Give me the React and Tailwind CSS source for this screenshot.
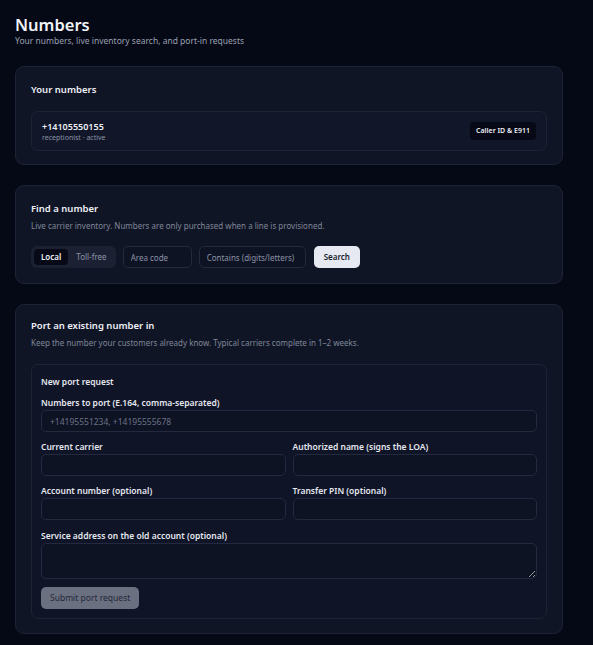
import React from 'react'

const Label = ({ children }) => (
  <div className="mb-[1px] text-[8.5px] font-semibold leading-[12px] text-[#e5e7ef]">{children}</div>
)

const Field = ({ placeholder = '' }) => (
  <input
    placeholder={placeholder}
    className="block h-[22px] w-full rounded-[5px] border border-[#232a3f] bg-[#0e1324] px-[8px] text-[8.5px] text-[#cbd0dc] outline-none placeholder:text-[#6b7285]"
  />
)

export default function App() {
  return (
    <div
      className="min-h-[645px] w-full bg-[#050815] px-[15px] pb-[13px] pt-[14px] text-white"
      style={{ fontFamily: '"Noto Sans", Inter, sans-serif' }}
    >
      {/* Header */}
      <h1 className="text-[16.5px] font-semibold leading-[22px] text-[#f1f3f8]">Numbers</h1>
      <p className="-mt-[1px] text-[8.5px] leading-[12px] text-[#9aa1b2]">
        Your numbers, live inventory search, and port-in requests
      </p>

      {/* Your numbers */}
      <section className="mt-[19px] w-[548px] rounded-[9px] border border-[#1d2336] bg-[#101525] px-[15px] pb-[13px] pt-[16px]">
        <h2 className="text-[9.5px] font-semibold leading-[14px] text-[#eef0f6]">Your numbers</h2>
        <div className="mt-[14px] flex h-[40px] items-center justify-between rounded-[7px] border border-[#1d2336] bg-[#111729] px-[10px]">
          <div>
            <div className="text-[9px] font-semibold leading-[13px] text-[#eef0f6]">+14105550155</div>
            <div className="text-[7px] leading-[10px] text-[#8a91a3]">receptionist · active</div>
          </div>
          <span className="flex h-[18px] items-center rounded-[4px] bg-[#070a16] px-[6px] text-[7px] font-semibold text-[#eef0f6]">
            Caller ID &amp; E911
          </span>
        </div>
      </section>

      {/* Find a number */}
      <section className="mt-[20px] w-[548px] rounded-[9px] border border-[#1d2336] bg-[#101525] px-[15px] pb-[15px] pt-[16px]">
        <h2 className="text-[9.5px] font-semibold leading-[14px] text-[#eef0f6]">Find a number</h2>
        <p className="mt-[4px] text-[8px] leading-[12px] text-[#7f8698]">
          Live carrier inventory. Numbers are only purchased when a line is provisioned.
        </p>
        <div className="mt-[14px] flex items-center gap-[7px]">
          <div className="flex h-[22px] items-center gap-[2px] rounded-[6px] bg-[#1b2133] p-[3px]">
            <span className="flex h-[16px] items-center rounded-[4px] bg-[#070a16] px-[7px] text-[8px] font-semibold text-[#f1f3f8]">
              Local
            </span>
            <span className="flex h-[16px] items-center px-[6px] text-[8px] text-[#8b92a4]">Toll-free</span>
          </div>
          <input
            placeholder="Area code"
            className="block h-[22px] w-[69px] rounded-[5px] border border-[#232a3f] bg-[#0e1324] px-[7px] text-[8px] outline-none placeholder:text-[#8b92a4]"
          />
          <input
            placeholder="Contains (digits/letters)"
            className="block h-[22px] w-[107px] rounded-[5px] border border-[#232a3f] bg-[#0e1324] px-[7px] text-[8px] outline-none placeholder:text-[#8b92a4]"
          />
          <button className="ml-[1px] h-[22px] rounded-[5px] bg-[#e6e9f2] px-[10px] text-[8px] font-semibold text-[#1a1f2e]">
            Search
          </button>
        </div>
      </section>

      {/* Port in */}
      <section className="mt-[20px] w-[548px] rounded-[9px] border border-[#1d2336] bg-[#101525] px-[15px] pb-[14px] pt-[14px]">
        <h2 className="text-[9.5px] font-semibold leading-[14px] text-[#eef0f6]">Port an existing number in</h2>
        <p className="mt-[4px] text-[8px] leading-[12px] text-[#7f8698]">
          Keep the number your customers already know. Typical carriers complete in 1–2 weeks.
        </p>

        <div className="mt-[15px] rounded-[7px] border border-[#1d2336] bg-[#0f1426] px-[9px] pb-[9px] pt-[11px]">
          <div className="text-[8.5px] font-semibold leading-[12px] text-[#e5e7ef]">New port request</div>

          <div className="mt-[9px]">
            <Label>Numbers to port (E.164, comma-separated)</Label>
            <Field placeholder="+14195551234, +14195555678" />
          </div>

          <div className="mt-[9px] grid grid-cols-2 gap-x-[7px] gap-y-[9px]">
            <div>
              <Label>Current carrier</Label>
              <Field />
            </div>
            <div>
              <Label>Authorized name (signs the LOA)</Label>
              <Field />
            </div>
            <div>
              <Label>Account number (optional)</Label>
              <Field />
            </div>
            <div>
              <Label>Transfer PIN (optional)</Label>
              <Field />
            </div>
          </div>

          <div className="mt-[10px]">
            <Label>Service address on the old account (optional)</Label>
            <textarea className="block h-[36px] w-full resize-y rounded-[5px] border border-[#232a3f] bg-[#0e1324] px-[8px] py-[4px] text-[8.5px] outline-none" />
          </div>

          <button className="mt-[8px] block h-[22px] rounded-[5px] bg-[#6b7080] px-[9px] text-[8.5px] text-[#23283a]">
            Submit port request
          </button>
        </div>
      </section>
    </div>
  )
}
